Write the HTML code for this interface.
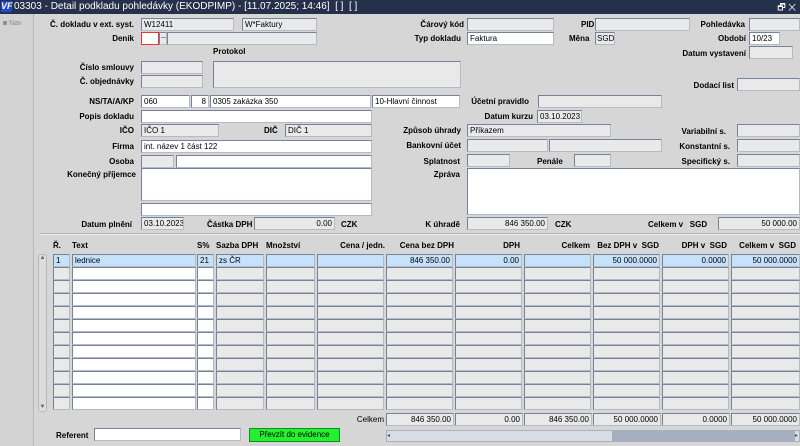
<!DOCTYPE html>
<html><head><meta charset="utf-8"><style>
*{box-sizing:border-box;margin:0;padding:0}
body{width:800px;height:446px;overflow:hidden;background:#d6d6d6;font-family:"Liberation Sans",Arial,sans-serif;font-size:8px;color:#000;position:relative}
#tb{position:absolute;left:0;top:0;width:800px;height:14px;background:#25304b;color:#fff;font-size:10px;line-height:14px;padding-left:14px;white-space:nowrap}
#logo{position:absolute;left:1px;top:1px;width:11px;height:11px;background:#2347c8;color:#fff;font-size:9px;font-weight:bold;line-height:11px;text-align:center;font-style:italic}
#side{position:absolute;left:0;top:14px;width:34px;height:432px;background:#d3d3d3;border-right:1px solid #b8b8b8}
.l{position:absolute;font-weight:bold;white-space:nowrap;line-height:13px}
.r{text-align:right}
.f,.w{position:absolute;height:13px;background:#e9e9e9;border:1px solid #b4bac6;border-top-color:#76819a;border-left-color:#76819a;line-height:11px;padding:0 2px;white-space:nowrap;overflow:hidden;font-size:8px}
.w{background:#fff}
.b{background:#c6e2fb}
.n{text-align:right}
</style></head><body>
<div id="tb"><div id="logo">VF</div>03303 - Detail podkladu pohledávky (EKODPIMP) - [11.07.2025; 14:46]&nbsp; [ ]&nbsp; [ ]<span style="position:absolute;right:4px;top:0;font-size:9px">🗗 ✕</span></div>
<div id="side"><div style="position:absolute;left:3px;top:6px;color:#888;font-size:7px">◙ Nav</div></div>

<div class="l r" style="right:666px;top:18px">Č. dokladu v ext. syst.</div>
<div class="f" style="left:141px;top:18px;width:93px">W12411</div>
<div class="f" style="left:242px;top:18px;width:75px">W*Faktury</div>
<div class="l r" style="right:336px;top:18px">Čárový kód</div>
<div class="f" style="left:467px;top:18px;width:87px"></div>
<div class="l" style="left:581px;top:18px">PID</div>
<div class="f" style="left:595px;top:18px;width:95px"></div>
<div class="l r" style="right:55px;top:18px">Pohledávka</div>
<div class="f" style="left:749px;top:18px;width:51px"></div>

<div class="l r" style="right:666px;top:32px">Deník</div>
<div class="w" style="left:141px;top:32px;width:18px;border:1px solid #e33"></div>
<div class="f" style="left:159px;top:32px;width:8px;font-size:6px;padding:0 1px">---</div>
<div class="f" style="left:167px;top:32px;width:150px"></div>
<div class="l r" style="right:339px;top:32px">Typ dokladu</div>
<div class="w" style="left:467px;top:32px;width:87px">Faktura</div>
<div class="l" style="left:569px;top:32px">Měna</div>
<div class="f" style="left:595px;top:32px;width:20px;padding:0 1px">SGD</div>
<div class="l r" style="right:54px;top:32px">Období</div>
<div class="w" style="left:749px;top:32px;width:31px">10/23</div>

<div class="l" style="left:213px;top:45px">Protokol</div>
<div class="l r" style="right:54px;top:47px">Datum vystavení</div>
<div class="f" style="left:749px;top:46px;width:44px"></div>

<div class="l r" style="right:666px;top:61px">Číslo smlouvy</div>
<div class="f" style="left:141px;top:61px;width:62px"></div>
<div class="f" style="left:213px;top:61px;width:248px;height:27px"></div>
<div class="l r" style="right:666px;top:75px">Č. objednávky</div>
<div class="f" style="left:141px;top:75px;width:62px"></div>
<div class="l r" style="right:66px;top:79px">Dodací list</div>
<div class="f" style="left:737px;top:78px;width:63px"></div>

<div class="l r" style="right:666px;top:95px">NS/TA/A/KP</div>
<div class="w" style="left:141px;top:95px;width:49px">060</div>
<div class="w n" style="left:191px;top:95px;width:18px">8</div>
<div class="w" style="left:210px;top:95px;width:161px">0305 zakázka 350</div>
<div class="w" style="left:372px;top:95px;width:88px">10-Hlavní činnost</div>
<div class="l r" style="right:271px;top:95px">Účetní pravidlo</div>
<div class="f" style="left:538px;top:95px;width:124px"></div>

<div class="l r" style="right:666px;top:110px">Popis dokladu</div>
<div class="w" style="left:141px;top:110px;width:231px"></div>
<div class="l r" style="right:267px;top:110px">Datum kurzu</div>
<div class="f" style="left:537px;top:110px;width:45px">03.10.2023</div>

<div class="l r" style="right:666px;top:124px">IČO</div>
<div class="f" style="left:141px;top:124px;width:78px">IČO 1</div>
<div class="l" style="left:264px;top:124px">DIČ</div>
<div class="f" style="left:285px;top:124px;width:87px">DIČ 1</div>
<div class="l r" style="right:339px;top:124px">Způsob úhrady</div>
<div class="f" style="left:467px;top:124px;width:144px">Příkazem</div>
<div class="l r" style="right:74px;top:125px">Variabilní s.</div>
<div class="f" style="left:737px;top:124px;width:63px"></div>

<div class="l r" style="right:666px;top:140px">Firma</div>
<div class="w" style="left:141px;top:140px;width:231px">int. název 1 část 122</div>
<div class="l r" style="right:339px;top:139px">Bankovní účet</div>
<div class="f" style="left:467px;top:139px;width:81px"></div>
<div class="f" style="left:549px;top:139px;width:113px"></div>
<div class="l r" style="right:70px;top:140px">Konstantní s.</div>
<div class="f" style="left:737px;top:139px;width:63px"></div>

<div class="l r" style="right:666px;top:155px">Osoba</div>
<div class="f" style="left:141px;top:155px;width:33px"></div>
<div class="w" style="left:176px;top:155px;width:196px"></div>
<div class="l r" style="right:340px;top:155px">Splatnost</div>
<div class="f" style="left:467px;top:154px;width:43px"></div>
<div class="l" style="left:537px;top:155px">Penále</div>
<div class="f" style="left:574px;top:154px;width:37px"></div>
<div class="l r" style="right:70px;top:155px">Specifický s.</div>
<div class="f" style="left:737px;top:154px;width:63px"></div>

<div class="l r" style="right:664px;top:168px">Konečný příjemce</div>
<div class="w" style="left:141px;top:168px;width:231px;height:33px"></div>
<div class="w" style="left:141px;top:203px;width:231px"></div>
<div class="l r" style="right:340px;top:168px">Zpráva</div>
<div class="w" style="left:467px;top:168px;width:333px;height:47px"></div>

<div class="l r" style="right:668px;top:218px">Datum plnění</div>
<div class="f" style="left:141px;top:217px;width:43px">03.10.2023</div>
<div class="l" style="left:207px;top:218px">Částka DPH</div>
<div class="f n" style="left:254px;top:217px;width:81px">0.00</div>
<div class="l" style="left:341px;top:218px">CZK</div>
<div class="l r" style="right:340px;top:218px">K úhradě</div>
<div class="f n" style="left:467px;top:217px;width:81px">846 350.00</div>
<div class="l" style="left:555px;top:218px">CZK</div>
<div class="l" style="left:648px;top:218px">Celkem v&nbsp;&nbsp; SGD</div>
<div class="f n" style="left:718px;top:217px;width:82px">50 000.00</div>

<div style="position:absolute;left:40px;top:233px;width:760px;height:2px;border-top:1px solid #b0b0b0;border-bottom:1px solid #f0f0f0"></div>

<div class="l" style="left:53px;top:239px">Ř.</div>
<div class="l" style="left:72px;top:239px">Text</div>
<div class="l" style="left:197px;top:239px">S%</div>
<div class="l" style="left:216px;top:239px">Sazba DPH</div>
<div class="l" style="left:266px;top:239px">Množství</div>
<div class="l r" style="right:415px;top:239px">Cena / jedn.</div>
<div class="l r" style="right:346px;top:239px">Cena bez DPH</div>
<div class="l r" style="right:280px;top:239px">DPH</div>
<div class="l r" style="right:210px;top:239px">Celkem</div>
<div class="l r" style="right:141px;top:239px">Bez DPH v&nbsp; SGD</div>
<div class="l r" style="right:73px;top:239px">DPH v&nbsp; SGD</div>
<div class="l r" style="right:4px;top:239px">Celkem v&nbsp; SGD</div>

<div style="position:absolute;left:38px;top:254px;width:9px;height:158px;background:#dcdcdc;border:1px solid #b8b8b8;border-radius:3px"></div>
<div style="position:absolute;left:38px;top:254px;width:9px;height:9px;font-size:6px;text-align:center;color:#666;line-height:9px">▲</div>
<div style="position:absolute;left:38px;top:403px;width:9px;height:9px;font-size:6px;text-align:center;color:#666;line-height:9px">▼</div>

<div id="grid"></div>

<div class="l r" style="right:416px;top:413px;font-weight:normal">Celkem</div>
<div class="f n" style="left:386px;top:413px;width:68px">846 350.00</div>
<div class="f n" style="left:455px;top:413px;width:68px">0.00</div>
<div class="f n" style="left:524px;top:413px;width:68px">846 350.00</div>
<div class="f n" style="left:593px;top:413px;width:68px">50 000.0000</div>
<div class="f n" style="left:662px;top:413px;width:68px">0.0000</div>
<div class="f n" style="left:731px;top:413px;width:69px">50 000.0000</div>

<div class="l" style="left:56px;top:429px">Referent</div>
<div class="w" style="left:94px;top:428px;width:147px"></div>
<div style="position:absolute;left:249px;top:428px;width:91px;height:14px;background:#22f030;border:1px solid #109018;text-align:center;line-height:12px;font-size:8px">Převzít do evidence</div>
<div style="position:absolute;left:386px;top:430px;width:414px;height:12px;background:#d8dce4;border:1px solid #a8afbd"></div>
<div style="position:absolute;left:612px;top:431px;width:183px;height:10px;background:#a4afc2"></div>
<div style="position:absolute;left:387px;top:431px;width:6px;height:10px;font-size:6px;line-height:10px;color:#555">◂</div>
<div style="position:absolute;left:795px;top:431px;width:5px;height:10px;font-size:6px;line-height:10px;color:#555">▸</div>

<script>
var cols=[[53,17],[72,124],[197,17],[216,48],[266,49],[317,67],[386,67],[455,67],[524,67],[593,67],[662,67],[731,69]];
var r1=["1","lednice","21","zs ČR","","","846 350.00","0.00","","50 000.0000","0.0000","50 000.0000"];
var h="";
for(var r=0;r<12;r++){var y=254+r*13;for(var c=0;c<cols.length;c++){var cls="f";var t="";
if(r==0){cls="f b";t=r1[c];}else if(c==1||c==2)cls="w";
if(c>=5)cls+=" n";
h+='<div class="'+cls+'" style="left:'+cols[c][0]+'px;top:'+y+'px;width:'+cols[c][1]+'px">'+t+'</div>';}}
document.getElementById("grid").innerHTML=h;
</script>
</body></html>
